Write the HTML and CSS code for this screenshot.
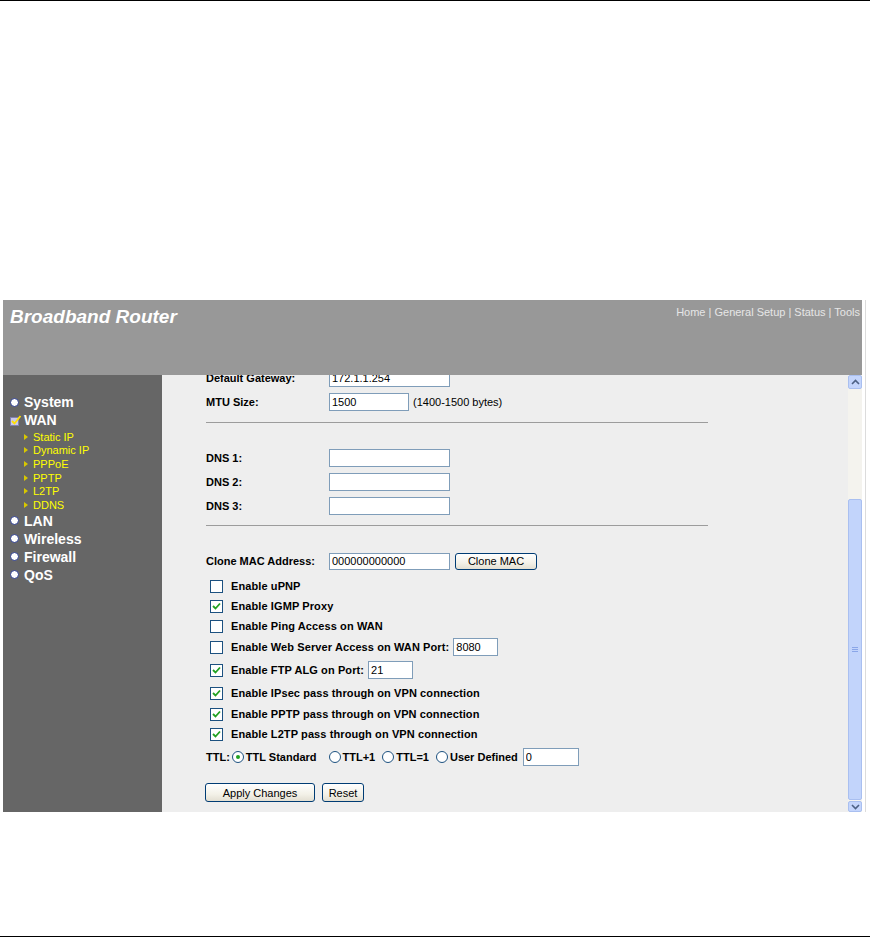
FILE: index.html
```html
<!DOCTYPE html>
<html>
<head>
<meta charset="utf-8">
<link rel="stylesheet" href="styles.css">
</head>
<body>
<div class="rule"></div>
<div class="page-gap"></div>
<div class="screen">
  <div class="win">
    <div class="header">
      <div class="title">Broadband Router</div>
      <div class="nav">Home | General Setup | Status | Tools</div>
    </div>
    <div class="main">
      <div class="side">
        <div class="mi"><span class="dot"></span><span class="mt">System</span></div>
        <div class="mi"><svg class="chk-ico" width="12" height="11" viewBox="0 0 12 11"><rect x="0.5" y="2.5" width="8" height="8" fill="#c8c8e8" stroke="#8080b0"/><path d="M2 6 L4.5 8.5 L10.5 1" stroke="#ffe000" stroke-width="1.8" fill="none"/></svg><span class="mt">WAN</span></div>
        <div class="subs">
          <div class="si"><span class="tri"></span>Static IP</div>
          <div class="si"><span class="tri"></span>Dynamic IP</div>
          <div class="si"><span class="tri"></span>PPPoE</div>
          <div class="si"><span class="tri"></span>PPTP</div>
          <div class="si"><span class="tri"></span>L2TP</div>
          <div class="si"><span class="tri"></span>DDNS</div>
        </div>
        <div class="mi"><span class="dot"></span><span class="mt">LAN</span></div>
        <div class="mi"><span class="dot"></span><span class="mt">Wireless</span></div>
        <div class="mi"><span class="dot"></span><span class="mt">Firewall</span></div>
        <div class="mi"><span class="dot"></span><span class="mt">QoS</span></div>
      </div>
      <div class="content">
        <div class="form">
          <div class="row"><span class="lbl">Default Gateway:</span><input class="tx w120" value="172.1.1.254"></div>
          <div class="row"><span class="lbl">MTU Size:</span><input class="tx w79" value="1500"><span class="note">(1400-1500 bytes)</span></div>
          <div class="sep first"></div>
          <div class="row"><span class="lbl">DNS 1:</span><input class="tx w120" value=""></div>
          <div class="row"><span class="lbl">DNS 2:</span><input class="tx w120" value=""></div>
          <div class="row"><span class="lbl">DNS 3:</span><input class="tx w120" value=""></div>
          <div class="sep second"></div>
          <div class="row mac"><span class="lbl">Clone MAC Address:</span><input class="tx w120 h17" value="000000000000"><button class="btn clone">Clone MAC</button></div>
          <div class="crow h20"><span class="cb"></span><span class="cl">Enable uPNP</span></div>
          <div class="crow h20"><span class="cb on"><svg width="9" height="8" viewBox="0 0 9 8"><path d="M1 4 L3.5 6.5 L8 1.5" stroke="#21a121" stroke-width="1.8" fill="none"/></svg></span><span class="cl">Enable IGMP Proxy</span></div>
          <div class="crow h20"><span class="cb"></span><span class="cl">Enable Ping Access on WAN</span></div>
          <div class="crow h22"><span class="cb"></span><span class="cl">Enable Web Server Access on WAN Port:</span><input class="tx w44 port" value="8080"></div>
          <div class="crow h24"><span class="cb on"><svg width="9" height="8" viewBox="0 0 9 8"><path d="M1 4 L3.5 6.5 L8 1.5" stroke="#21a121" stroke-width="1.8" fill="none"/></svg></span><span class="cl">Enable FTP ALG on Port:</span><input class="tx w44 port" value="21"></div>
          <div class="crow h22"><span class="cb on"><svg width="9" height="8" viewBox="0 0 9 8"><path d="M1 4 L3.5 6.5 L8 1.5" stroke="#21a121" stroke-width="1.8" fill="none"/></svg></span><span class="cl">Enable IPsec pass through on VPN connection</span></div>
          <div class="crow h20"><span class="cb on"><svg width="9" height="8" viewBox="0 0 9 8"><path d="M1 4 L3.5 6.5 L8 1.5" stroke="#21a121" stroke-width="1.8" fill="none"/></svg></span><span class="cl">Enable PPTP pass through on VPN connection</span></div>
          <div class="crow h20"><span class="cb on"><svg width="9" height="8" viewBox="0 0 9 8"><path d="M1 4 L3.5 6.5 L8 1.5" stroke="#21a121" stroke-width="1.8" fill="none"/></svg></span><span class="cl">Enable L2TP pass through on VPN connection</span></div>
          <div class="trow">
            <span class="tl">TTL:</span>
            <span class="rb on"></span><span class="rl">TTL Standard</span>
            <span class="rb gap"></span><span class="rl">TTL+1</span>
            <span class="rb"></span><span class="rl">TTL=1</span>
            <span class="rb"></span><span class="rl last">User Defined</span>
            <input class="tx w55 port" value="0">
          </div>
          <div class="brow"><button class="btn apply">Apply Changes</button><button class="btn reset">Reset</button></div>
        </div>
      </div>
      <div class="scroll">
        <div class="sb-btn up"><svg width="9" height="6" viewBox="0 0 9 6"><path d="M1 5 L4.5 1.5 L8 5" stroke="#4d6185" stroke-width="1.6" fill="none"/></svg></div>
        <div class="sb-track"></div>
        <div class="sb-thumb"><span class="grip"></span><span class="grip"></span><span class="grip"></span></div>
        <div class="sb-btn down"><svg width="9" height="6" viewBox="0 0 9 6"><path d="M1 1 L4.5 4.5 L8 1" stroke="#4d6185" stroke-width="1.6" fill="none"/></svg></div>
      </div>
    </div>
  </div>
  <div class="edge"></div>
</div>
<div class="foot-gap"></div>
<div class="rule"></div>
</body>
</html>
```

FILE: styles.css
```css
html, body {
  margin: 0;
  padding: 0;
  background: #fff;
  font-family: "Liberation Sans", Arial, sans-serif;
}
.rule { height: 1px; background: #000; }
.page-gap { height: 299px; }
.foot-gap { height: 124px; }

.screen {
  display: flex;
  padding-left: 3px;
}
.win { width: 859px; }
.edge {
  width: 1px;
  margin-left: 3px;
  background: #dcdcdc;
}

.header {
  height: 75px;
  background: #989898;
  display: flex;
  justify-content: space-between;
  align-items: flex-start;
}
.title {
  color: #fff;
  font-size: 19px;
  font-weight: bold;
  font-style: italic;
  line-height: 22px;
  padding: 6px 0 0 7px;
}
.nav {
  color: #e6e6e6;
  font-size: 11px;
  line-height: 14px;
  padding: 5px 2px 0 0;
}

.main {
  display: flex;
  height: 437px;
}
.side {
  width: 159px;
  background: #666;
  padding-top: 18px;
  box-sizing: border-box;
}
.mi {
  height: 18px;
  display: flex;
  align-items: center;
  padding-left: 7px;
  color: #fff;
  font-size: 14px;
  font-weight: bold;
}
.dot {
  width: 7px;
  height: 7px;
  border-radius: 50%;
  background: #fff;
  border: 1px solid #2a3a8a;
  margin-right: 5px;
}
.chk-ico { margin-right: 2px; }
.subs { padding-top: 1px; }
.si {
  height: 13.6px;
  display: flex;
  align-items: center;
  padding-left: 21px;
  color: #ffff00;
  font-size: 11px;
}
.tri {
  width: 0;
  height: 0;
  border-top: 3px solid transparent;
  border-bottom: 3px solid transparent;
  border-left: 4px solid #d8c800;
  margin-right: 5px;
}

.content {
  flex: 1;
  background: #eeeeee;
  overflow: hidden;
}
.form {
  margin-top: -9px;
  padding-left: 44px;
  font-size: 11px;
  color: #000;
}
.row {
  height: 24px;
  display: flex;
  align-items: center;
}
.row.mac { margin-bottom: 3px; }
.lbl {
  width: 123px;
  font-weight: bold;
}
.tx {
  box-sizing: border-box;
  height: 18px;
  border: 1px solid #7f9db9;
  background: #fff;
  font-family: "Liberation Sans", Arial, sans-serif;
  font-size: 11px;
  padding: 0 2px;
  margin: 0;
  outline: none;
  color: #000;
}
.w120 { width: 121px; }
.w79 { width: 80px; }
.w44 { width: 45px; }
.w55 { width: 56px; }
.h17 { height: 17px; }
.note { margin-left: 4px; }

.sep {
  width: 502px;
  height: 1px;
  background: #9c9c9c;
}
.sep.first { margin: 8px 0 23px; }
.sep.second { margin: 7px 0 23px; }

.btn {
  box-sizing: border-box;
  font-family: "Liberation Sans", Arial, sans-serif;
  font-size: 11px;
  color: #000;
  border: 1px solid #003c74;
  border-radius: 3px;
  background: linear-gradient(#ffffff, #f3f1e8 60%, #e3dfd2);
  padding: 0;
  margin: 0;
}
.clone { width: 82px; height: 17px; margin-left: 5px; }

.crow {
  display: flex;
  align-items: center;
  padding-left: 4px;
}
.h20 { height: 20px; }
.h22 { height: 22px; }
.h24 { height: 24px; }
.cb {
  box-sizing: border-box;
  width: 13px;
  height: 13px;
  border: 1px solid #1c5180;
  background: #fff;
  margin-right: 8px;
  display: flex;
  align-items: center;
  justify-content: center;
}
.cl {
  font-weight: bold;
  letter-spacing: 0.1px;
}
.port { margin-left: 4px; }

.trow {
  height: 26px;
  display: flex;
  align-items: center;
}
.tl { font-weight: bold; margin-right: 2px; }
.rb {
  box-sizing: border-box;
  width: 12px;
  height: 12px;
  border-radius: 50%;
  border: 1px solid #1c5180;
  background: #fff;
  margin-right: 2px;
  position: relative;
}
.rb.on::after {
  content: "";
  position: absolute;
  left: 3px;
  top: 3px;
  width: 4px;
  height: 4px;
  border-radius: 50%;
  background: #21a121;
}
.rb.gap { margin-left: 5px; }
.rl { font-weight: bold; margin-right: 7px; }
.rl.last { margin-right: 1px; }

.brow {
  margin-top: 13px;
  display: flex;
  gap: 7px;
  margin-left: -1px;
}
.apply { width: 110px; height: 19px; }
.reset { width: 42px; height: 19px; }

.scroll {
  width: 14px;
  display: flex;
  flex-direction: column;
  background: #f4f3ee;
}
.sb-btn {
  height: 14px;
  box-sizing: border-box;
  background: #c4d5fc;
  border: 1px solid #a9bff0;
  border-radius: 2px;
  display: flex;
  align-items: center;
  justify-content: center;
}
.sb-btn.down { height: 11px; align-items: flex-start; padding-top: 2px; }
.sb-track { height: 110px; }
.sb-thumb {
  flex: 1;
  box-sizing: border-box;
  background: #c2d4fb;
  border: 1px solid #a9bff0;
  border-radius: 2px;
  margin-bottom: 1px;
  display: flex;
  flex-direction: column;
  align-items: center;
  justify-content: center;
  gap: 1px;
}
.grip {
  width: 6px;
  height: 1px;
  background: #8aa6e8;
}
```
